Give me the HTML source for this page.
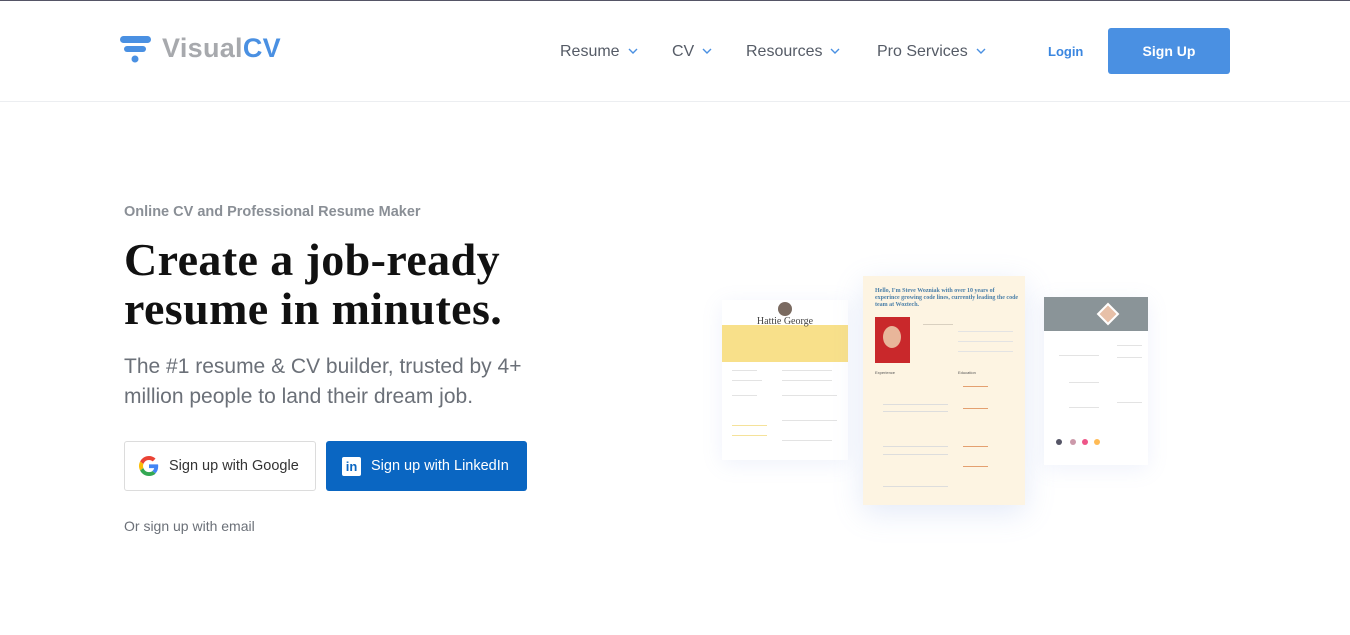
<!DOCTYPE html>
<html><head><meta charset="utf-8"><style>
*{margin:0;padding:0;box-sizing:border-box}
body{width:1350px;height:635px;background:#fff;font-family:"Liberation Sans",sans-serif;position:relative;overflow:hidden}
.top{position:absolute;left:0;top:0;width:1350px;height:1px;background:#556}
.hdr{position:absolute;left:0;top:1px;width:1350px;height:101px;border-bottom:1px solid #eceef1}
.nav{position:absolute;top:42px;font-size:16px;color:#555b66}
.nav svg{margin-left:8px;vertical-align:2px}
.a{position:absolute}
.line{position:absolute;height:2px;background:#e3e3e3}
</style></head><body>
<div class="top"></div>
<div class="hdr">
 <svg class="a" style="left:119px;top:34px" width="34" height="30"><rect x="1" y="1" width="31" height="7" rx="3.5" fill="#4a90e2"/><rect x="5" y="11" width="22" height="6" rx="3" fill="#4a90e2"/><circle cx="16" cy="24" r="3.5" fill="#4a90e2"/></svg>
 <div class="a" style="left:162px;top:32px;font-size:27px;font-weight:bold;color:#a7a9ad;letter-spacing:0.3px">Visual<span style="color:#4a90e2">CV</span></div>
 <div class="nav" style="left:560px">Resume<svg width="10" height="6"><path d="M1 1l4 4 4-4" stroke="#4a90e2" stroke-width="1.4" fill="none"/></svg></div>
 <div class="nav" style="left:672px">CV<svg width="10" height="6"><path d="M1 1l4 4 4-4" stroke="#4a90e2" stroke-width="1.4" fill="none"/></svg></div>
 <div class="nav" style="left:746px">Resources<svg width="10" height="6"><path d="M1 1l4 4 4-4" stroke="#4a90e2" stroke-width="1.4" fill="none"/></svg></div>
 <div class="nav" style="left:877px">Pro Services<svg width="10" height="6"><path d="M1 1l4 4 4-4" stroke="#4a90e2" stroke-width="1.4" fill="none"/></svg></div>
 <div class="a" style="left:1048px;top:43px;font-size:13px;font-weight:bold;color:#3a86e0">Login</div>
 <div class="a" style="left:1108px;top:27px;width:122px;height:46px;background:#4a90e2;border-radius:3px;color:#fff;font-size:14px;font-weight:bold;text-align:center;line-height:46px">Sign Up</div>
</div>
<div class="a" style="left:124px;top:204px;font-size:14.5px;font-weight:bold;color:#8a8f96">Online CV and Professional Resume Maker</div>
<div class="a" style="left:124px;top:235px;font-family:'Liberation Serif',serif;font-size:46px;font-weight:bold;line-height:49px;color:#111;letter-spacing:0.4px">Create a job-ready<br>resume in minutes.</div>
<div class="a" style="left:124px;top:352px;font-size:21px;line-height:30px;color:#6b7078">The #1 resume &amp; CV builder, trusted by 4+<br>million people to land their dream job.</div>
<div class="a" style="left:124px;top:441px;width:192px;height:50px;border:1px solid #dcdcdc;border-radius:3px">
 <svg class="a" style="left:14px;top:14px" width="20" height="20" viewBox="0 0 48 48"><path fill="#EA4335" d="M24 9.5c3.5 0 6.6 1.2 9 3.5l6.7-6.7C35.6 2.4 30.2 0 24 0 14.6 0 6.6 5.4 2.7 13.3l7.8 6C12.4 13.7 17.7 9.5 24 9.5z"/><path fill="#4285F4" d="M46.1 24.5c0-1.6-.1-3.1-.4-4.5H24v9h12.4c-.5 2.9-2.2 5.3-4.6 7l7.5 5.8c4.4-4 6.8-10 6.8-17.3z"/><path fill="#FBBC05" d="M10.5 28.7c-.5-1.5-.8-3.0-.8-4.7s.3-3.2.8-4.7l-7.8-6C1 16.6 0 20.2 0 24s1 7.4 2.7 10.7l7.8-6z"/><path fill="#34A853" d="M24 48c6.5 0 11.9-2.1 15.9-5.8l-7.5-5.8c-2.1 1.4-4.8 2.3-8.4 2.3-6.3 0-11.6-4.2-13.5-9.9l-7.8 6C6.6 42.6 14.6 48 24 48z"/></svg>
 <div class="a" style="left:44px;top:16px;font-size:14.5px;color:#333">Sign up with Google</div>
</div>
<div class="a" style="left:326px;top:441px;width:201px;height:50px;background:#0a66c2;border-radius:3px">
 <div class="a" style="left:16px;top:16px;width:19px;height:19px;background:#fff;border-radius:2px;color:#0a66c2;font-weight:bold;font-size:13px;line-height:20px;text-align:center">in</div>
 <div class="a" style="left:45px;top:17px;font-size:14.5px;color:#fff">Sign up with LinkedIn</div>
</div>
<div class="a" style="left:124px;top:518px;font-size:14px;color:#6b7078">Or sign up with email</div>

<div class="a" style="left:722px;top:300px;width:126px;height:160px;background:#fff;box-shadow:0 4px 20px rgba(120,150,220,.12)">
 <div class="a" style="left:0;top:25px;width:126px;height:37px;background:#f8e08a"></div>
 <div class="a" style="left:56px;top:2px;width:14px;height:14px;border-radius:50%;background:#7a6a60"></div>
 <div class="a" style="left:0;top:16px;width:126px;text-align:center;font-family:'Liberation Serif',serif;font-size:10px;color:#444">Hattie George</div>
 <div class="line" style="left:10px;top:70px;width:25px;height:1px"></div><div class="line" style="left:60px;top:70px;width:50px;height:1px"></div>
 <div class="line" style="left:10px;top:80px;width:30px;height:1px"></div><div class="line" style="left:60px;top:80px;width:50px;height:1px"></div>
 <div class="line" style="left:10px;top:95px;width:25px;height:1px"></div><div class="line" style="left:60px;top:95px;width:55px;height:1px"></div>
 <div class="line" style="left:10px;top:125px;width:35px;height:1px;background:#f5e29a"></div><div class="line" style="left:60px;top:120px;width:55px;height:1px"></div>
 <div class="line" style="left:10px;top:135px;width:35px;height:1px;background:#f5e29a"></div><div class="line" style="left:60px;top:140px;width:50px;height:1px"></div>
</div>
<div class="a" style="left:863px;top:276px;width:162px;height:229px;background:#fdf4e2;box-shadow:0 8px 28px rgba(120,150,220,.2)">
 <div class="a" style="left:12px;top:12px;width:145px;font-family:'Liberation Serif',serif;font-size:6px;line-height:7px;color:#4a7fa8;font-weight:bold">Hello, I'm Steve Wozniak with over 10 years of experince growing code lines, currently leading the code team at Woztech.</div>
 <div class="a" style="left:12px;top:41px;width:35px;height:46px;background:#c9282b"></div>
 <div class="a" style="left:20px;top:50px;width:18px;height:22px;border-radius:50%;background:#e8b69a"></div>
 <div class="line" style="left:60px;top:48px;width:30px;height:1px;background:#d9d0c0"></div><div class="line" style="left:95px;top:55px;width:55px;height:1px"></div>
 <div class="line" style="left:95px;top:65px;width:55px;height:1px"></div><div class="line" style="left:95px;top:75px;width:55px;height:1px"></div>
 <div class="a" style="left:12px;top:94px;font-size:4px;color:#555">Experience</div><div class="a" style="left:95px;top:94px;font-size:4px;color:#555">Education</div>
 <div class="line" style="left:20px;top:128px;width:65px;height:1px;background:#ddd"></div><div class="line" style="left:20px;top:135px;width:65px;height:1px;background:#ddd"></div>
 <div class="line" style="left:20px;top:170px;width:65px;height:1px;background:#ddd"></div><div class="line" style="left:20px;top:178px;width:65px;height:1px;background:#ddd"></div>
 <div class="line" style="left:20px;top:210px;width:65px;height:1px;background:#ddd"></div>
 <div class="line" style="left:100px;top:110px;width:25px;height:1px;background:#e4a070"></div><div class="line" style="left:100px;top:132px;width:25px;height:1px;background:#e4a070"></div>
 <div class="line" style="left:100px;top:170px;width:25px;height:1px;background:#e4a070"></div><div class="line" style="left:100px;top:190px;width:25px;height:1px;background:#e4a070"></div>
</div>
<div class="a" style="left:1044px;top:297px;width:104px;height:168px;background:#fff;box-shadow:0 4px 20px rgba(120,150,220,.12)">
 <div class="a" style="left:0;top:0;width:104px;height:34px;background:#8a9498"></div>
 <div class="a" style="left:56px;top:9px;width:16px;height:16px;transform:rotate(45deg);background:#e7c0a8;border:2px solid #fff"></div>
 <div class="line" style="left:15px;top:58px;width:40px;height:1px"></div><div class="line" style="left:73px;top:48px;width:25px;height:1px"></div>
 <div class="line" style="left:25px;top:85px;width:30px;height:1px"></div><div class="line" style="left:73px;top:60px;width:25px;height:1px"></div>
 <div class="line" style="left:25px;top:110px;width:30px;height:1px"></div><div class="line" style="left:73px;top:105px;width:25px;height:1px"></div>
 <div class="a" style="left:12px;top:142px;width:6px;height:6px;border-radius:50%;background:#556"></div>
 <div class="a" style="left:26px;top:142px;width:6px;height:6px;border-radius:50%;background:#c9a"></div>
 <div class="a" style="left:38px;top:142px;width:6px;height:6px;border-radius:50%;background:#e58"></div>
 <div class="a" style="left:50px;top:142px;width:6px;height:6px;border-radius:50%;background:#fb5"></div>
</div>
</body></html>
